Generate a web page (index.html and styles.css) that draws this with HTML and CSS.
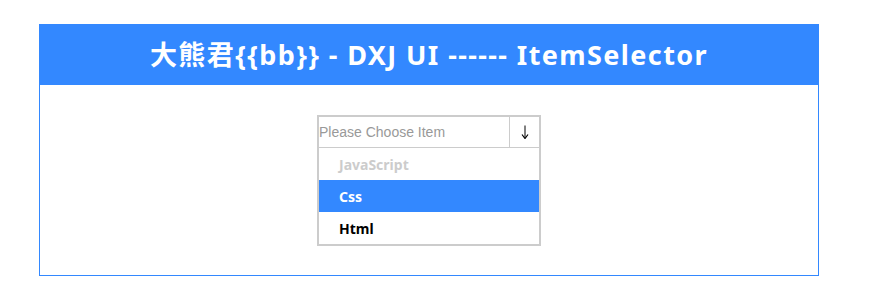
FILE: index.html
```html
<!DOCTYPE html>
<html>
<head>
<meta charset="utf-8">
<link rel="stylesheet" href="styles.css">
</head>
<body>
<div class="panel">
  <div class="panel-header">大熊君{{bb}} - DXJ UI ------ ItemSelector</div>
  <div class="panel-body">
    <div class="selector">
      <div class="selector-head">
        <div class="selector-input">Please Choose Item</div>
        <div class="selector-btn">
          <svg width="8" height="14" viewBox="0 0 8 14"><path d="M4 0.5V13" stroke="#000" stroke-width="1" fill="none"/><path d="M1 9.5L4 13.5L7 9.5" stroke="#000" stroke-width="1.2" fill="none"/></svg>
        </div>
      </div>
      <ul class="selector-list">
        <li class="item disabled">JavaScript</li>
        <li class="item active">Css</li>
        <li class="item">Html</li>
      </ul>
    </div>
  </div>
</div>
</body>
</html>
```
FILE: styles.css
```css
html, body {
  margin: 0;
  padding: 0;
  background: #fff;
}
body {
  padding: 24px 0 0 39px;
}
.panel {
  width: 780px;
  box-sizing: border-box;
  border: 1px solid #3388ff;
}
.panel-header {
  background: #3388ff;
  color: #fff;
  height: 61px;
  margin: -1px -1px 0 -1px;
  padding-bottom: 2px;
  box-sizing: border-box;
  display: flex;
  align-items: center;
  justify-content: center;
  font-family: "Noto Sans", "Noto Sans CJK SC", sans-serif;
  font-weight: bold;
  font-size: 27px;
  letter-spacing: 1.4px;
}
.panel-body {
  padding: 30px 0 29px;
  display: flex;
  justify-content: center;
}
.selector {
  width: 224px;
  box-sizing: border-box;
  border: 2px solid #cccccc;
}
.selector-head {
  display: flex;
  height: 30px;
  border-bottom: 1px solid #cccccc;
}
.selector-input {
  flex: 1;
  font-family: "Liberation Sans", Arial, sans-serif;
  font-size: 14px;
  color: #999;
  display: flex;
  align-items: center;
  padding-left: 0;
}
.selector-btn {
  width: 29px;
  border-left: 1px solid #cccccc;
  display: flex;
  align-items: center;
  justify-content: center;
}
.selector-list {
  list-style: none;
  margin: 0;
  padding: 0;
}
.item {
  height: 32px;
  display: flex;
  align-items: center;
  padding-left: 20px;
  font-family: "Noto Sans", sans-serif;
  font-weight: bold;
  font-size: 14px;
  color: #000;
}
.item.disabled {
  color: #cccccc;
}
.item.active {
  background: #3388ff;
  color: #fff;
}
```
